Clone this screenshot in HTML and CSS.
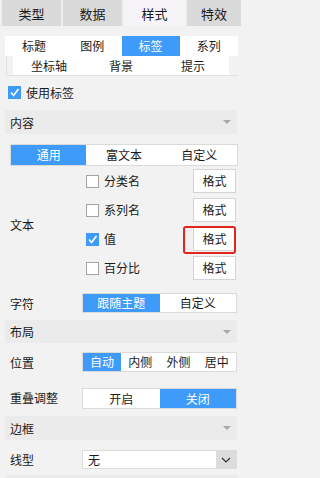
FILE: index.html
```html
<!DOCTYPE html>
<html lang="zh">
<head>
<meta charset="utf-8">
<link rel="stylesheet" href="styles.css">
</head>
<body>
<div class="tabs">
  <div class="tab">类型</div>
  <div class="tab">数据</div>
  <div class="tab active">样式</div>
  <div class="tab">特效</div>
</div>
<div class="panel">
  <div class="subtabs">
    <div class="row1">
      <div class="st">标题</div>
      <div class="st">图例</div>
      <div class="st on">标签</div>
      <div class="st">系列</div>
    </div>
    <div class="row2">
      <div class="st">坐标轴</div>
      <div class="st">背景</div>
      <div class="st">提示</div>
    </div>
  </div>

  <div class="usecheck">
    <span class="cb checked"><svg viewBox="0 0 13 13" width="13" height="13"><path d="M3 6.5 L5.5 9.5 L10.5 3" fill="none" stroke="#fff" stroke-width="1.6"/></svg></span>
    <span class="cbtext">使用标签</span>
  </div>

  <div class="header h1"><span>内容</span><span class="tri"></span></div>

  <div class="seg seg-content">
    <div class="sg on">通用</div>
    <div class="sg">富文本</div>
    <div class="sg">自定义</div>
  </div>

  <div class="textblock">
    <div class="tlabel">文本</div>
    <div class="trows">
      <div class="trow">
        <span class="cb"></span><span class="cbtext">分类名</span>
        <span class="fmt">格式</span>
      </div>
      <div class="trow">
        <span class="cb"></span><span class="cbtext">系列名</span>
        <span class="fmt">格式</span>
      </div>
      <div class="trow">
        <span class="cb checked"><svg viewBox="0 0 13 13" width="13" height="13"><path d="M3 6.5 L5.5 9.5 L10.5 3" fill="none" stroke="#fff" stroke-width="1.6"/></svg></span><span class="cbtext">值</span>
        <span class="fmt marked">格式<span class="redbox"></span></span>
      </div>
      <div class="trow">
        <span class="cb"></span><span class="cbtext">百分比</span>
        <span class="fmt">格式</span>
      </div>
    </div>
  </div>

  <div class="frow r-char">
    <div class="flabel">字符</div>
    <div class="seg seg2">
      <div class="sg on">跟随主题</div>
      <div class="sg">自定义</div>
    </div>
  </div>

  <div class="header h2"><span>布局</span><span class="tri"></span></div>

  <div class="frow r-pos">
    <div class="flabel">位置</div>
    <div class="seg seg4">
      <div class="sg on">自动</div>
      <div class="sg">内侧</div>
      <div class="sg">外侧</div>
      <div class="sg">居中</div>
    </div>
  </div>

  <div class="frow r-overlap">
    <div class="flabel up">重叠调整</div>
    <div class="seg seg2 tall">
      <div class="sg">开启</div>
      <div class="sg on">关闭</div>
    </div>
  </div>

  <div class="header h3"><span>边框</span><span class="tri"></span></div>

  <div class="frow r-line">
    <div class="flabel">线型</div>
    <div class="select">
      <span class="selval">无</span>
      <span class="selarrow"><svg viewBox="0 0 10 6" width="10" height="6"><path d="M1 1 L5 5 L9 1" fill="none" stroke="#333" stroke-width="1.2"/></svg></span>
    </div>
  </div>

  <div class="header h4"></div>
</div>
</body>
</html>
```
FILE: styles.css
```css
* { box-sizing: border-box; }
html, body { margin: 0; padding: 0; }
body {
  background: #f2f2f2;
  font-family: "Noto Sans CJK SC", "Noto Sans", sans-serif;
  font-size: 12px;
  color: #1a1a1a;
  width: 241px;
  height: 478px;
  overflow: hidden;
}

.tabs {
  display: grid;
  grid-template-columns: 59px 59px 61px 1fr;
  column-gap: 2px;
  padding-left: 2px;
  height: 26px;
  background: #efefef;
}
.tab {
  background: #dadada;
  display: flex;
  align-items: center;
  justify-content: center;
  font-size: 13px;
}
.tab.active { background: #f6f4f6; }

.panel { padding: 0 3px 0 5px; }

.subtabs { margin-top: 10px; }
.row1 {
  display: grid;
  grid-template-columns: repeat(4, 1fr);
  height: 20px;
}
.st {
  background: #fff;
  display: flex;
  align-items: center;
  justify-content: center;
  line-height: 1;
}
.st.on { background: #3f9bfa; color: #fff; }
.row2 {
  display: grid;
  grid-template-columns: 72px 72px 72px;
  height: 20px;
  margin-left: 1px;
  padding-left: 6px;
  border-left: 1px solid #e2e2e2;
  border-bottom: 1px solid #e2e2e2;
}
.row2 .st { height: 19px; }

.usecheck {
  display: flex;
  align-items: center;
  margin-top: 10px;
  margin-left: 3px;
  height: 13px;
}
.cb {
  width: 13px;
  height: 13px;
  border: 1px solid #a3a3a3;
  background: #fff;
  display: inline-block;
  flex: none;
}
.cb.checked { border: none; background: #3f9bfa; }
.cb svg { display: block; }
.cbtext { margin-left: 5px; line-height: 1; }

.header {
  height: 24px;
  background: #ebebeb;
  margin-right: 1px;
  display: flex;
  align-items: center;
  justify-content: space-between;
  padding: 0 6px 0 5px;
}
.tri {
  width: 0;
  height: 0;
  border-left: 4px solid transparent;
  border-right: 4px solid transparent;
  border-top: 4px solid #a8a8a8;
}
.h1 { margin-top: 11px; }
.h2 { margin-top: 7px; height: 23px; }
.h3 { margin-top: 7px; }
.h4 { margin-top: 6px; }

.seg {
  display: grid;
  border: 1px solid #dadada;
  background: #fff;
}
.sg {
  display: flex;
  align-items: center;
  justify-content: center;
  line-height: 1;
}
.sg.on { background: #3f9bfa; color: #fff; }
.seg-content {
  margin-top: 10px;
  margin-left: 5px;
  height: 22px;
  grid-template-columns: repeat(3, 1fr);
}

.textblock {
  display: flex;
  margin-top: 3px;
  margin-left: 5px;
}
.tlabel {
  width: 76px;
  display: flex;
  align-items: center;
}
.trows { flex: 1; display: flex; flex-direction: column; gap: 5px; }
.trow {
  display: flex;
  align-items: center;
  height: 24px;
}
.trow .cbtext { flex: 1; }
.fmt {
  position: relative;
  width: 43px;
  height: 24px;
  margin-right: 2px;
  background: #fff;
  border: 1px solid #d4d4d4;
  display: flex;
  align-items: center;
  justify-content: center;
  line-height: 1;
}
.redbox {
  position: absolute;
  left: -11px;
  top: -2px;
  width: 53px;
  height: 28px;
  border: 2px solid #e3231f;
  border-radius: 3px;
}

.frow {
  display: flex;
  margin-left: 5px;
  align-items: center;
}
.flabel { width: 72px; }
.flabel.up { align-self: flex-start; padding-top: 1px; }
.frow .seg, .frow .select { width: 155px; }
.seg2 { grid-template-columns: 1fr 1fr; height: 20px; }
.seg2.tall { height: 21px; }
.seg4 { grid-template-columns: repeat(4, 1fr); height: 20px; }
.r-char { margin-top: 13px; }
.r-pos { margin-top: 9px; }
.r-overlap { margin-top: 16px; }
.r-line { margin-top: 10px; }

.select {
  height: 19px;
  background: #fff;
  border: 1px solid #dcdcdc;
  display: flex;
  align-items: center;
}
.selval { flex: 1; padding-left: 5px; line-height: 1; }
.selarrow {
  width: 20px;
  height: 100%;
  background: #dcdcdc;
  display: flex;
  align-items: center;
  justify-content: center;
}
.selarrow svg { display: block; }
```
